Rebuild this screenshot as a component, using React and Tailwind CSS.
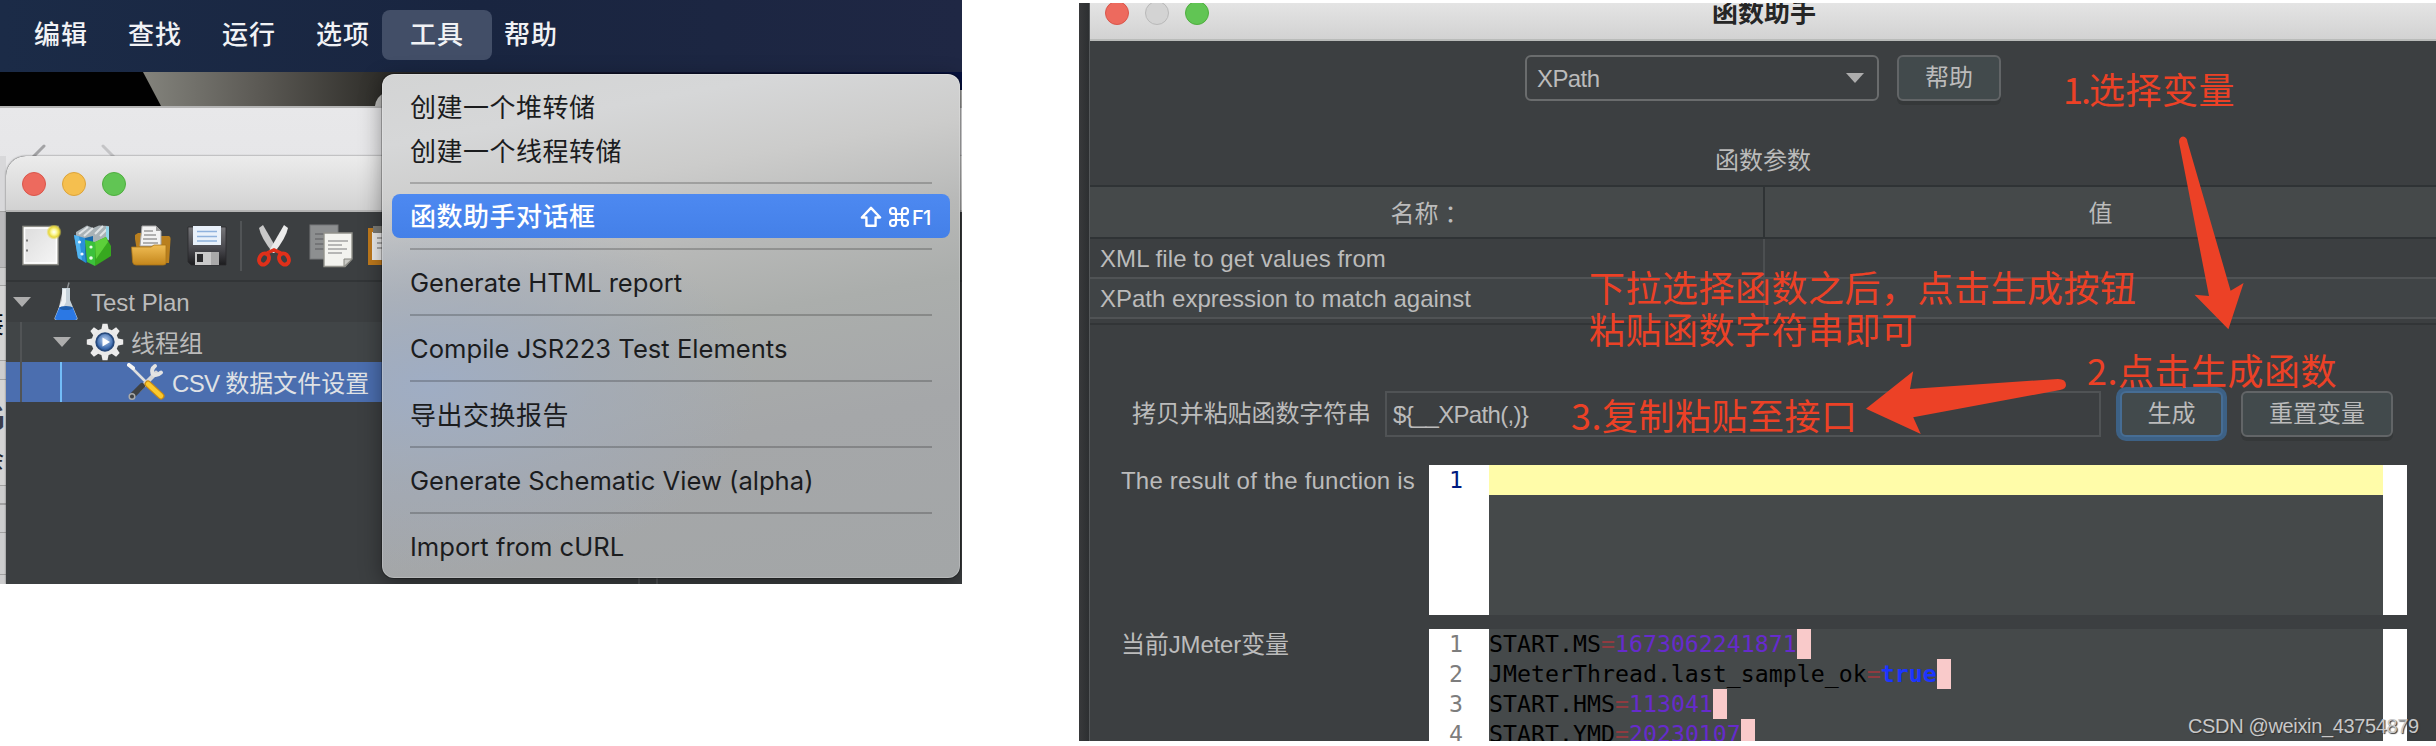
const cjk = "font-['Liberation_Sans','Noto_Sans_CJK_SC',sans-serif]";

function Light({ c }) {
  return <span className={"h-6 w-6 shrink-0 rounded-full border " + c} />;
}

function MenuSep() {
  return (
    <div className="flex h-[22px] items-center px-[28px]">
      <div className="h-[2px] w-full bg-black/20" />
    </div>
  );
}

function MenuItem({ children, track }) {
  return <div className={"flex h-[44px] items-center whitespace-nowrap px-[28px] " + track}>{children}</div>;
}

function ShiftIcon() {
  return (
    <svg width="22" height="22" viewBox="0 0 24 24" fill="none" stroke="white" strokeWidth="2.6" strokeLinejoin="round">
      <path d="M12 2 L22 12.5 H17 V21.5 H7 V12.5 H2 Z" />
    </svg>
  );
}

function CommandIcon() {
  return (
    <svg width="20" height="20" viewBox="2 2 20 20" fill="none" stroke="white" strokeWidth="2.2">
      <path d="M15 6v12a3 3 0 1 0 3-3H6a3 3 0 1 0 3 3V6a3 3 0 1 0-3 3h12a3 3 0 1 0-3-3" />
    </svg>
  );
}

function NewIcon() {
  return (
    <svg width="40" height="42" viewBox="0 0 40 42">
      <defs>
        <linearGradient id="pg" x1="0" y1="0" x2="1" y2="1"><stop offset="0" stopColor="#dcdcdc" /><stop offset="1" stopColor="#f6f6f6" /></linearGradient>
        <radialGradient id="glow"><stop offset="0" stopColor="#fff" /><stop offset=".35" stopColor="#fdf9a0" /><stop offset=".7" stopColor="#e8d83c" /><stop offset="1" stopColor="#e8d83c" stopOpacity="0.1" /></radialGradient>
      </defs>
      <rect x="1" y="1.5" width="35" height="38" fill="url(#pg)" stroke="#8e8e88" strokeWidth="1.6" />
      <rect x="2.5" y="3" width="32" height="35" fill="none" stroke="#fff" strokeWidth="1.6" />
      <path d="M4 15.5h2M4 25.5h2" stroke="#777" strokeWidth="2" />
      <circle cx="32" cy="7" r="7.5" fill="url(#glow)" />
    </svg>
  );
}

function BindersIcon() {
  return (
    <svg width="44" height="44" viewBox="0 0 44 44">
      <path d="M3 8 L14 1.500 L20 4 L26 1.500 L36 2 V16 L20 24 L3 14Z" fill="#a9b2b6" />
      <path d="M6 10 L15 3 M11 12 L20 4 M22 10 L30 2 M27 12 L35 4" stroke="#dfe3e5" strokeWidth="2" />
      <path d="M36 3 V16 L33 14 V2Z" fill="#8fd3e8" />
      <path d="M1 11 L12 14 L13 39 L5 34Z" fill="#2b8fd8" /><path d="M1 11 L6 12.5 L9 36 L5 34Z" fill="#52b4f0" />
      <path d="M12 14 L20 12 V34 L13 39Z" fill="#1668aa" />
      <path d="M12 16 L22 18 V42 L14 38Z" fill="#3cc13c" /><path d="M22 18 L33 13 L38 22 V32 L22 42Z" fill="#37a81f" /><path d="M22 18 L33 13 L35 18 L23 35Z" fill="#5cd03a" />
      <circle cx="18" cy="23" r="1.6" fill="#eaffea" /><circle cx="18" cy="34" r="1.8" fill="#eaffea" /><circle cx="6.5" cy="18" r="1.6" fill="#eaf6ff" /><circle cx="9" cy="30" r="1.6" fill="#eaf6ff" />
    </svg>
  );
}

function FolderIcon() {
  return (
    <svg width="40" height="42" viewBox="0 0 40 42">
      <defs><linearGradient id="fo" x1="0" y1="0" x2="0" y2="1"><stop offset="0" stopColor="#f0bd55" /><stop offset="1" stopColor="#c4861b" /></linearGradient></defs>
      <path d="M4 14 V10 L7 8 H14 L16 11 H38 Q40 12 39.5 15 L38 38 H8Z" fill="#b97f1e" />
      <path d="M9 21 L11 1 H25 L30 6 V21Z" fill="#f2f2f2" stroke="#a5a5a5" /><path d="M25 1 L30 6 H25Z" fill="#999" />
      <path d="M13 6h9M13 10h12M12 14h14M12 18h15" stroke="#9a9a9a" strokeWidth="1.5" />
      <path d="M0.5 22 H20 L23 20 H35 V38 Q35 40 32 40 H5 Q2 40 1.6 37Z" fill="url(#fo)" stroke="#a87316" strokeWidth=".8" />
    </svg>
  );
}

function DiskIcon() {
  return (
    <svg width="40" height="42" viewBox="0 0 40 42">
      <defs><linearGradient id="dk" x1="0" y1="0" x2="0" y2="1"><stop offset="0" stopColor="#77777a" /><stop offset=".6" stopColor="#45454a" /><stop offset="1" stopColor="#1c1c1e" /></linearGradient></defs>
      <path d="M1 2 H39 V40 H4 L1 37Z" fill="url(#dk)" stroke="#2a2a2c" strokeWidth=".8" />
      <rect x="6" y="1" width="28" height="19" fill="#e9f1fa" /><path d="M10 6.500h20M10 11.500h20M10 16h20" stroke="#8fb2dd" strokeWidth="1.6" />
      <rect x="8" y="27" width="24" height="13" fill="#c9c9c9" /><rect x="10" y="29" width="6" height="8" fill="#2a2a2c" /><rect x="24" y="27" width="8" height="13" fill="#a9a9a9" />
    </svg>
  );
}

function CutIcon() {
  return (
    <svg width="36" height="44" viewBox="0 0 36 44">
      <path d="M3 4 L7 1 L22 27 L17 29 Q5 14 3 4Z" fill="#c9c9c9" /><path d="M32 4 L28 1 L13 27 L18 29 Q30 14 32 4Z" fill="#ececec" />
      <ellipse cx="8" cy="35" rx="4.600" ry="5.800" transform="rotate(28 8 35)" fill="none" stroke="#e0301a" strokeWidth="4" />
      <ellipse cx="28" cy="35" rx="4.600" ry="5.800" transform="rotate(-28 28 35)" fill="none" stroke="#e0301a" strokeWidth="4" />
      <path d="M11 29 L18 26 L25 29" stroke="#e0301a" strokeWidth="3.500" fill="none" />
    </svg>
  );
}

function CopyIcon() {
  return (
    <svg width="44" height="44" viewBox="0 0 44 44">
      <rect x="1" y="1" width="28" height="34" fill="#8d8f90" stroke="#77797a" /><path d="M6 10h9M6 15h9M6 20h9M6 25h9" stroke="#6c6e6f" strokeWidth="1.600" />
      <path d="M15 9 H43 V35 L36 42.500 H15Z" fill="#f3f3ef" stroke="#92928c" strokeWidth="1.400" /><path d="M43 35 H35 V42.500Z" fill="#c9c9c4" stroke="#85857f" />
      <path d="M19 17h20M19 21h14M19 25h19M19 29h14" stroke="#a2a2a2" strokeWidth="1.600" />
    </svg>
  );
}

function PasteIcon() {
  return (
    <svg width="14" height="42" viewBox="0 0 14 42">
      <path d="M0 3 H14 V40 H0Z" fill="#c07a1c" /><path d="M4 7 H14 V35 H4Z" fill="#eee" /><path d="M5 1 H14 V8 H5Z" fill="#7d7d78" /><path d="M9 13h5M9 18h5M9 23h5" stroke="#999" strokeWidth="1.600" />
    </svg>
  );
}

function FlaskIcon() {
  return (
    <svg width="26" height="40" viewBox="0 0 26 40">
      <path d="M14.500 6 L16 0.500" stroke="#8b8f92" strokeWidth="1.500" />
      <path d="M9 6 H17 V18 L24.500 36 Q25 38 22 38 H4 Q1 38 1.500 36 L9 18Z" fill="#c6d2da" /><path d="M10 7 H13 V20 L6 34 H4Z" fill="#fff" opacity=".7" />
      <path d="M6.500 25 H19.500 L24 36 Q24 38 22 38 H4 Q2 38 2 36Z" fill="#2b78e4" /><ellipse cx="13" cy="26" rx="6.500" ry="2" fill="#1f5fae" />
    </svg>
  );
}

function GearIcon() {
  const teeth = [0, 45, 90, 135, 180, 225, 270, 315];
  return (
    <svg width="38" height="38" viewBox="0 0 38 38">
      <defs><radialGradient id="gb" cx=".5" cy=".4"><stop offset="0" stopColor="#bcd3f2" /><stop offset="1" stopColor="#3463a8" /></radialGradient></defs>
      {teeth.map((t) => (
        <path key={t} d="M15 8 L16.500 0.800 H21.500 L23 8Z" fill="#ececec" transform={"rotate(" + t + " 19 19)"} />
      ))}
      <circle cx="19" cy="19" r="13.500" fill="#e9e9e9" />
      <circle cx="19" cy="19" r="8.800" fill="url(#gb)" stroke="#27497c" strokeWidth="1.800" />
      <path d="M16.500 14.500 L24 19 L16.500 23.500Z" fill="#fff" />
    </svg>
  );
}

function ToolsIcon() {
  return (
    <svg width="38" height="38" viewBox="0 0 38 38" strokeLinecap="round">
      <path d="M3 3 L18 18" stroke="#dedede" strokeWidth="2.600" /><path d="M2 2 L6 5" stroke="#f4f4f4" strokeWidth="4" />
      <path d="M29 10 L12 27" stroke="#d6d6d6" strokeWidth="4.500" /><path d="M28 3 Q24 6 25.500 10.500 Q29 14 34 9.500" stroke="#e3e3e3" strokeWidth="4" fill="none" />
      <path d="M15 23 L5 33" stroke="#3f4143" strokeWidth="6" /><circle cx="5" cy="33.500" r="2.800" fill="none" stroke="#aaa" strokeWidth="1.500" />
      <path d="M21 21 L34 33" stroke="#c98a12" strokeWidth="7" /><path d="M21 21 L34 33" stroke="#fbc92e" strokeWidth="4.500" />
    </svg>
  );
}

function Triangle() {
  return <svg className="shrink-0" width="18" height="10" viewBox="0 0 18 10"><path d="M0 0 H18 L9 10Z" fill="#adadad" /></svg>;
}

function Menu() {
  return (
    <div className="absolute left-[382px] top-[74px] h-[504px] w-[578px] rounded-xl bg-[radial-gradient(ellipse_330px_190px_at_8%_62%,#9fadc4_0%,#a1abbb99_50%,transparent_100%),linear-gradient(170deg,#d3d4d4_0%,#d6d7d8_12%,#cccccb_24%,#b7b8b7_38%,#abaeac_50%,#a5a7a9_70%,#a3a6a7_100%)] py-[10px] font-['Inter','Noto_Sans_CJK_SC',sans-serif] text-[#1b1c1e] shadow-[0_6px_22px_rgba(0,0,0,0.4),0_0_0_1px_rgba(0,0,0,0.25)] ring-1 ring-inset ring-white/20">
      <MenuItem track="pt-[2px] text-[26px] tracking-[0.5px]">创建一个堆转储</MenuItem>
      <MenuItem track="pt-[2px] text-[26px] tracking-[0.5px]">创建一个线程转储</MenuItem>
      <MenuSep />
      <div className="mx-[10px] flex h-[44px] items-center justify-between rounded-lg bg-linear-to-b from-[#4d89f1] to-[#4480e8] px-[18px] font-medium text-white">
        <span className="text-[26px] tracking-[0.5px]">函数助手对话框</span>
        <span className="flex items-center pt-[2px] text-[20px]">
          <ShiftIcon />
          <span className="ml-[7px] mr-[3px]"><CommandIcon /></span>
          <span className="w-[20px] pt-[2px] tracking-[-0.8px]">F1</span>
        </span>
      </div>
      <MenuSep />
      <MenuItem track="pt-[3px] text-[25.6px]">Generate HTML report</MenuItem>
      <MenuSep />
      <MenuItem track="pt-[3px] text-[25.6px]">Compile JSR223 Test Elements</MenuItem>
      <MenuSep />
      <MenuItem track="pt-[2px] text-[26px] tracking-[0.5px]">导出交换报告</MenuItem>
      <MenuSep />
      <MenuItem track="pt-[3px] text-[25.6px]">Generate Schematic View (alpha)</MenuItem>
      <MenuSep />
      <MenuItem track="pt-[3px] text-[25.6px]">Import from cURL</MenuItem>
    </div>
  );
}

function LeftShot() {
  return (
    <div className={"relative flex h-[584px] w-[962px] shrink-0 flex-col overflow-hidden bg-[#dcdcde] " + cjk}>
      <div className="flex h-[72px] shrink-0 items-center bg-linear-to-r from-[#1b2b47] via-[#192540] to-[#1f2744] pl-[14px] pb-[2px] text-[26px] font-medium tracking-[1px] text-[#f1f2f5]">
        <span className="w-[94px] pl-[20px]">编辑</span>
        <span className="w-[94px] pl-[20px]">查找</span>
        <span className="w-[94px] pl-[20px]">运行</span>
        <span className="w-[86px] pl-[20px]">选项</span>
        <span className="flex h-[50px] w-[110px] items-center rounded-lg bg-[#424e67] pl-[28px]">工具</span>
        <span className="pl-[12px]">帮助</span>
      </div>
      <svg className="shrink-0" width="962" height="34" viewBox="0 0 962 34">
        <defs><linearGradient id="wall"><stop offset=".14" stopColor="#86867f" /><stop offset=".27" stopColor="#5b5954" /><stop offset=".4" stopColor="#2d2c28" /><stop offset=".6" stopColor="#12142a" /><stop offset="1" stopColor="#06113e" /></linearGradient></defs>
        <rect width="962" height="34" fill="url(#wall)" />
        <path d="M0 0 H143 L161 34 H0Z" fill="#010101" />
        <path d="M375 34 Q376 25 384 21 L400 18 H962 V34Z" fill="#bdbdbb" />
      </svg>
      <div className="flex h-[478px] shrink-0 flex-col border-t-2 border-[#b5b5b5] bg-linear-to-b from-[#e8e8ea] to-[#d9d9db]">
        <div className="h-[48px] shrink-0">
          <svg width="160" height="48" viewBox="0 0 160 48" fill="none" strokeWidth="3" strokeLinecap="round">
            <path d="M44 38 L33 49" stroke="#a3a3a5" /><path d="M103 38 L114 49" stroke="#c4c4c6" />
          </svg>
        </div>
        <div className="flex flex-1">
          <div className="flex w-[6px] shrink-0 flex-col overflow-hidden bg-[#cdcdce]">
            <div className="h-[56px] shrink-0 border-b border-[#a2a2a2] bg-[#d8d8da]" />
            <div className="h-[56px] shrink-0 border-b border-[#a2a2a2] bg-[#b9b9bb]" />
            <div className="h-[18px] shrink-0 border-b border-[#a2a2a2]" />
            <div className="h-[75px] shrink-0 border-b border-[#a2a2a2] bg-[#d4d4d4] pt-[20px]"><span className="block -translate-x-[22px] text-[26px] leading-[36px] text-black">装</span></div>
            <div className="h-[19px] shrink-0 border-b border-[#a2a2a2]" />
            <div className="h-[106px] shrink-0 border-b border-[#a2a2a2] bg-[#d4d4d4] pt-[16px]"><span className="block -translate-x-[27px] text-[42px] font-bold leading-[44px] text-[#3b3d4c]">G</span><span className="block -translate-x-[20px] text-[24px] leading-[40px] text-[#222]">余</span></div>
            <div className="h-[19px] shrink-0 border-b-2 border-[#a2a2a2]" />
            <div className="h-[28px] shrink-0 border-b border-[#a2a2a2]" />
            <div className="h-[42px] shrink-0 border-b border-[#a2a2a2]" />
          </div>
          <div className="flex flex-1 flex-col overflow-hidden rounded-tl-[20px] bg-[#3c3f41] shadow-[0_0_2px_rgba(0,0,0,0.6)]">
            <div className="flex h-[56px] shrink-0 items-center gap-4 border-b-2 border-[#b4b4b4] bg-linear-to-b from-[#ececec] to-[#d2d2d2] pl-4 pt-[1px]">
              <Light c="border-[#d9564b] bg-[#ed6a5e]" />
              <Light c="border-[#dba33b] bg-[#f5bf4f]" />
              <Light c="border-[#4fae3f] bg-[#61c554]" />
            </div>
            <div className="flex h-[70px] shrink-0 items-center border-b-2 border-[#323537] pl-4">
              <NewIcon />
              <span className="ml-[11px] mr-[14px]"><BindersIcon /></span>
              <FolderIcon />
              <span className="ml-[16px]"><DiskIcon /></span>
              <span className="ml-[13px] mr-[14px] h-[50px] w-[2px] bg-[#515456]" />
              <CutIcon />
              <span className="ml-[17px] mr-[15px]"><CopyIcon /></span>
              <PasteIcon />
            </div>
            <div className="flex h-[40px] shrink-0 items-center pl-[7px] text-2xl text-[#bbb]">
              <Triangle />
              <span className="ml-[22px] mr-[12px]"><FlaskIcon /></span>
              <span className="pt-[2px]">Test Plan</span>
            </div>
            <div className="flex h-[40px] w-[634px] shrink-0 items-center bg-[#414547] text-2xl text-[#bbb]">
              <span className="ml-[14px] mr-[31px] h-full w-[2px] bg-[#515456]" />
              <Triangle />
              <span className="ml-[15px] mr-[7px]"><GearIcon /></span>
              <span className="pt-[3px]">线程组</span>
            </div>
            <div className="flex h-[40px] w-[634px] shrink-0 items-center bg-[#4b6eaf] text-2xl text-[#dfe1e5]">
              <span className="ml-[14px] h-full w-[2px] bg-[#515456]" />
              <span className="ml-[38px] mr-[65px] h-full w-[2px] bg-[#73bdf8]" />
              <ToolsIcon />
              <span className="ml-[7px] whitespace-nowrap pt-[3px]"><span className="tracking-[-0.7px]">CSV </span>数据文件设置</span>
            </div>
            <div className="mt-auto flex h-[8px] gap-[16px] pl-[632px]">
              <span className="w-[2px] bg-[#505355]" />
              <span className="w-[2px] bg-[#505355]" />
            </div>
          </div>
        </div>
      </div>
      <Menu />
    </div>
  );
}

const vars = [
  ["START.MS", "1673062241871", "text-[#662bcc]"],
  ["JMeterThread.last_sample_ok", "true", "font-bold text-[#1c35ff]"],
  ["START.HMS", "113041", "text-[#662bcc]"],
  ["START.YMD", "20230107", "text-[#662bcc]"],
];

const note = "absolute whitespace-nowrap font-['Noto_Sans_CJK_SC',sans-serif] text-[36px] leading-[42px] tracking-[0.5px] text-[#ec4126]";

function RightShot() {
  return (
    <div className={"relative mt-[3px] flex h-[738px] w-[1357px] shrink-0 overflow-hidden text-2xl text-[#bbb] " + cjk}>
      <div className="w-[11px] shrink-0 border-r border-[#55585a] bg-linear-to-r from-[#38393b] to-[#2d2f31]" />
      <div className="flex flex-1 flex-col bg-[#3c3f41]">
        <div className="relative flex h-[38px] shrink-0 items-start gap-4 border-b-2 border-[#b9bbb9] bg-linear-to-b from-[#e4e4e4] to-[#d2d2d2] pl-[15px]">
          <div className="-mt-[2px] flex gap-4">
            <Light c="border-[#d9564b] bg-[#ed6a5e]" />
            <Light c="border-[#b9b9b9] bg-[#d3d3d3]" />
            <Light c="border-[#4fae3f] bg-[#61c554]" />
          </div>
          <span className="-mt-[9px] ml-[487px] text-[26px] font-bold leading-[38px] text-[#262626]">函数助手</span>
        </div>
        <div className="flex h-[60px] shrink-0 gap-[18px] pl-[435px] pt-[14px]">
          <div className="flex h-[46px] w-[354px] items-center justify-between rounded-md border-2 border-[#6a6c6d] pl-[10px] pr-[13px]"><span className="pt-[2px] tracking-[-0.6px]">XPath</span><Triangle /></div>
          <div className="flex h-[46px] w-[104px] items-center justify-center rounded-md border-2 border-[#626567] bg-[#424a4c] shadow-[0_4px_0_#353839]">帮助</div>
        </div>
        <div className="flex h-[84px] shrink-0 items-end justify-center pb-[8px]">函数参数</div>
        <div className="flex h-[54px] shrink-0 border-y-2 border-[#2f3335] bg-[#45494a]">
          <div className="flex w-[675px] items-center justify-center border-r-2 border-[#2f3335] pt-[4px]">名称<span className="ml-[6px] -mr-[6px]">：</span></div>
          <div className="flex flex-1 items-center justify-center pt-[4px]">值</div>
        </div>
        <div className="flex h-[40px] shrink-0 border-b-2 border-[#505355]">
          <div className="flex w-[675px] items-center border-r-2 border-[#4c4f51] pl-[10px] pt-[2px] tracking-[0.1px]">XML file to get values from</div>
        </div>
        <div className="flex h-[40px] shrink-0 border-b-2 border-[#505355] bg-[#404446]">
          <div className="flex w-[675px] items-center border-r-2 border-[#4c4f51] pl-[10px] pt-[2px]">XPath expression to match against</div>
        </div>
        <div className="h-[6px] shrink-0 border-b-2 border-[#323537]" />
        <div className="mt-[66px] flex h-[46px] shrink-0 items-center pl-[42px]">
          <span className="w-[253px] whitespace-nowrap tracking-[-0.1px]">拷贝并粘贴函数字符串</span>
          <div className="flex h-full w-[716px] items-center border-2 border-[#505355] pl-[6px] pt-[2px] tracking-[-0.7px]">{"${__XPath(,)}"}</div>
          <div className="ml-[19px] flex h-full w-[103px] items-center justify-center rounded-md border-2 border-[#466d94] bg-[#424a4c] shadow-[0_0_0_4px_#3d6185]">生成</div>
          <div className="ml-[18px] flex h-full w-[152px] items-center justify-center rounded-md border-2 border-[#626567] bg-[#424a4c] shadow-[0_4px_0_#353839]">重置变量</div>
        </div>
        <div className="mt-[28px] flex h-[150px] shrink-0 pl-[31px] font-['DejaVu_Sans_Mono',monospace] text-[23.2px] leading-[30px] tracking-[0.03px]">
          <span className={"w-[308px] whitespace-nowrap text-2xl leading-[32px] tracking-[0.2px] " + cjk}>The result of the function is</span>
          <div className="w-[60px] border-r-2 border-white bg-white pl-[20px] text-[#001a80]">1</div>
          <div className="w-[894px] bg-[#45494a]"><div className="h-[30px] bg-[#fffca9]" /></div>
          <div className="w-[24px] bg-white" />
        </div>
        <div className="mt-[14px] flex h-[112px] shrink-0 overflow-hidden pl-[31px] font-['DejaVu_Sans_Mono',monospace] text-[23.2px] leading-[30px] tracking-[0.03px]">
          <span className={"w-[308px] whitespace-nowrap text-2xl leading-[32px] tracking-[-0.15px] " + cjk}>当前JMeter变量</span>
          <div className="w-[60px] bg-white pl-[20px] text-[#7d7d7d]">
            {vars.map((v, i) => <div key={v[0]}>{i + 1}</div>)}
          </div>
          <div className="w-[894px] bg-[#45494a] text-black">
            {vars.map((v) => (
              <div key={v[0]} className="flex h-[30px]">
                <span>{v[0]}</span><span className="text-[#8f3b40]">=</span><span className={v[2]}>{v[1]}</span><span className="h-[30px] w-[14px] bg-[#f9caca]" />
              </div>
            ))}
          </div>
          <div className="w-[24px] bg-white" />
        </div>
      </div>
      <svg className="absolute inset-0" width="1357" height="738" viewBox="1079 3 1357 738" fill="#ec4126">
        <path d="M2179 142 Q2179 137 2183 136.500 Q2187 137 2187.500 142 L2230.600 290.700 L2243.600 283 L2228.400 329.300 L2194.500 294.700 L2209 296Z" />
        <path d="M1866 408.700 L1913.200 371.300 L1910 389 L2058 379 Q2066 379 2066 385 Q2066 389 2060 390 L1913.200 417.300 L1920.800 434Z" />
      </svg>
      <div className={note + " left-[984px] top-[64px]"}><span className="tracking-[-2px]">1.</span>选择变量</div>
      <div className={note + " left-[510px] top-[262px]"}>下拉选择函数之后，点击生成按钮<br />粘贴函数字符串即可</div>
      <div className={note + " left-[1008px] top-[345px]"}>2.点击生成函数</div>
      <div className={note + " left-[492px] top-[390px]"}>3.复制粘贴至接口</div>
      <div className="absolute left-[1109px] top-[711px] whitespace-nowrap text-[20px] leading-[24px] tracking-[-0.35px] text-[#c8c8c8] [text-shadow:1px_1px_1px_#333]">CSDN @weixin_43754879</div>
    </div>
  );
}

export default function App() {
  return (
    <div className="flex h-[746px] w-[2436px] items-start justify-between overflow-hidden bg-white">
      <LeftShot />
      <RightShot />
    </div>
  );
}
